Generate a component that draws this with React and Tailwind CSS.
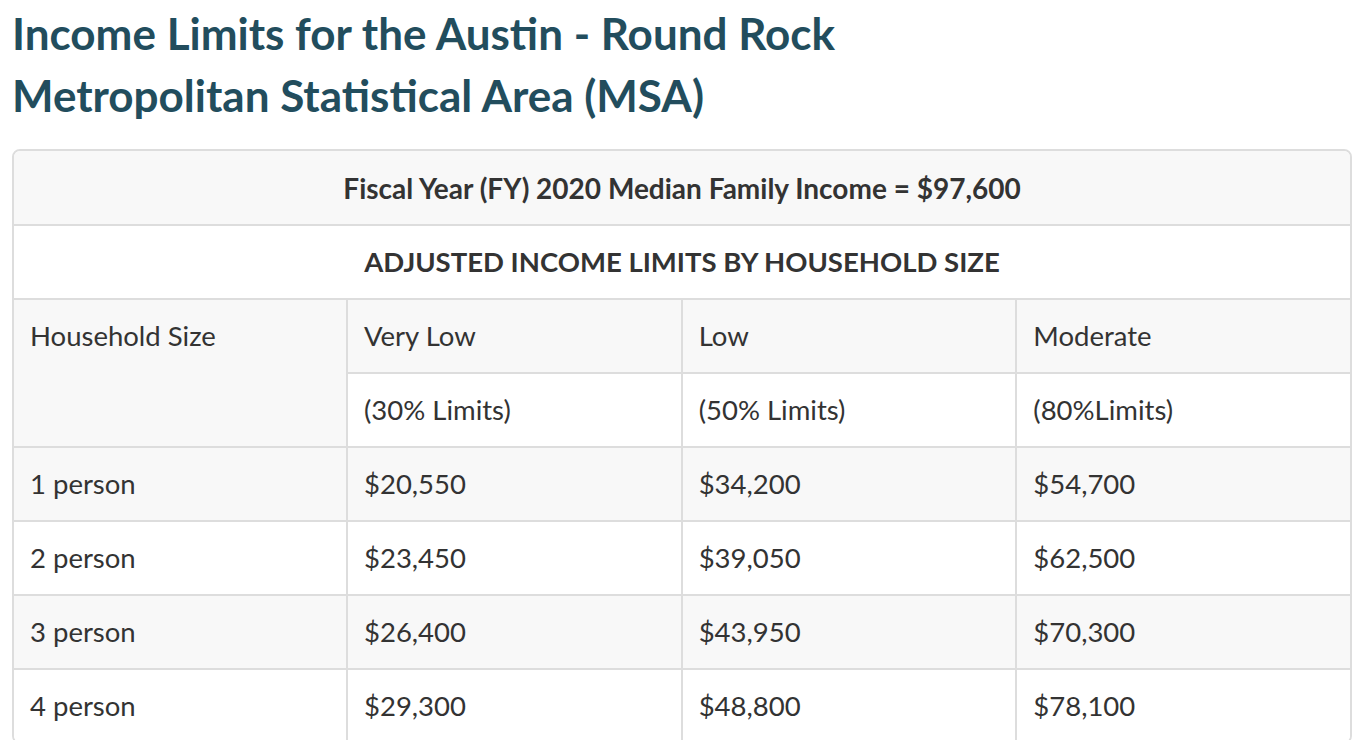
import React from "react";

const rows = [
  ["1 person", "$20,550", "$34,200", "$54,700"],
  ["2 person", "$23,450", "$39,050", "$62,500"],
  ["3 person", "$26,400", "$43,950", "$70,300"],
  ["4 person", "$29,300", "$48,800", "$78,100"],
];

const cell = "px-4 py-[21px] leading-[30px] border-t-2 border-[#dddddd]";

export default function App() {
  return (
    <div className="min-h-screen bg-white px-3 pt-[2px] text-[#333333]" style={{ fontFamily: "Lato, 'Open Sans', sans-serif" }}>
      <h1 className="text-[44px] font-bold leading-[62px] text-[#224d5d]">
        Income Limits for the Austin - Round Rock
        <br />
        Metropolitan Statistical Area (MSA)
      </h1>

      <div className="mt-[23px] overflow-hidden rounded-lg border-2 border-[#dddddd] text-[27.5px]">
        <div className="bg-[#f8f8f8] px-4 pt-[22px] pb-[21px] text-center text-[28px] font-bold leading-[30px]">
          Fiscal Year (FY) 2020 Median Family Income = $97,600
        </div>
        <div className={`${cell} bg-white text-center text-[27.5px] font-bold`}>
          ADJUSTED INCOME LIMITS BY HOUSEHOLD SIZE
        </div>

        <div className="grid grid-cols-[332px_1fr_1fr_1fr]">
          {/* header */}
          <div className={`${cell} row-span-2 bg-[#f8f8f8]`}>Household Size</div>
          <div className={`${cell} border-l-2 bg-[#f8f8f8]`}>Very Low</div>
          <div className={`${cell} border-l-2 bg-[#f8f8f8]`}>Low</div>
          <div className={`${cell} border-l-2 bg-[#f8f8f8]`}>Moderate</div>
          <div className={`${cell} border-l-2 bg-white`}>(30% Limits)</div>
          <div className={`${cell} border-l-2 bg-white`}>(50% Limits)</div>
          <div className={`${cell} border-l-2 bg-white`}>(80%Limits)</div>

          {rows.map((r, i) =>
            r.map((v, j) => (
              <div
                key={i + "-" + j}
                className={`${cell} ${j > 0 ? "border-l-2" : ""} ${i % 2 === 0 ? "bg-[#f8f8f8]" : "bg-white"}`}
              >
                {v}
              </div>
            ))
          )}
        </div>
      </div>
    </div>
  );
}
